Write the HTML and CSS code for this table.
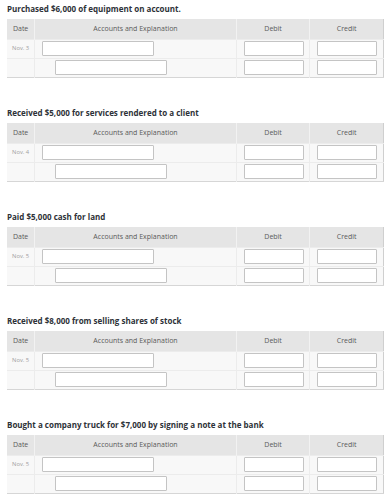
FILE: index.html
```html
<!DOCTYPE html>
<html lang="en">
<head>
  <meta charset="UTF-8">
  <meta name="viewport" content="width=device-width, initial-scale=1">
  <title>Journal Entries</title>
  <link rel="stylesheet" href="styles.css">
</head>
<body>
  <div id="entries">
    <!-- sections are built below -->
  </div>

  <script>
    const entries = [
      { title: "Purchased $6,000 of equipment on account.", date: "Nov. 3" },
      { title: "Received $5,000 for services rendered to a client", date: "Nov. 4" },
      { title: "Paid $5,000 cash for land", date: "Nov. 5" },
      { title: "Received $8,000 from selling shares of stock", date: "Nov. 5" },
      { title: "Bought a company truck for $7,000 by signing a note at the bank", date: "Nov. 5" }
    ];

    const wrap = document.getElementById("entries");

    entries.forEach((entry) => {
      const section = document.createElement("div");
      section.className = "entry";
      section.innerHTML = `
        <h3>${entry.title}</h3>
        <table>
          <thead>
            <tr>
              <th class="col-date">Date</th>
              <th class="col-acct">Accounts and Explanation</th>
              <th class="col-amt">Debit</th>
              <th class="col-amt">Credit</th>
            </tr>
          </thead>
          <tbody>
            <tr>
              <td class="date">${entry.date}</td>
              <td><input type="text" class="acct"></td>
              <td><input type="text" class="amt"></td>
              <td><input type="text" class="amt"></td>
            </tr>
            <tr>
              <td class="date"></td>
              <td><input type="text" class="acct indent"></td>
              <td><input type="text" class="amt"></td>
              <td><input type="text" class="amt"></td>
            </tr>
          </tbody>
        </table>
      `;
      wrap.appendChild(section);
    });
  </script>
</body>
</html>
```

FILE: styles.css
```css
body {
  margin: 0;
  padding: 0 3px 0 7px;
  font-family: "Open Sans", "Liberation Sans", sans-serif;
  background: #fff;
  color: #333;
}

.entry {
  height: 104px;
}

h3 {
  margin: 0;
  padding: 4px 0 5px;
  height: 10px;
  font-size: 8px;
  line-height: 10px;
  font-weight: 700;
  color: #2e3238;
}

table {
  width: 377px;
  border-collapse: collapse;
  table-layout: fixed;
  border-right: 1px solid #cfcfcf;
  border-bottom: 1px solid #d6d6d6;
}

thead tr {
  height: 20px;
}

tbody tr {
  height: 19px;
}

th {
  padding: 0;
  background: #e5e5e5;
  border-left: 1px solid #f2f2f2;
  font-size: 7px;
  line-height: 10px;
  font-weight: 400;
  color: #5a5a5a;
  text-align: center;
  vertical-align: middle;
}

th:first-child {
  border-left: none;
}

.col-date { width: 27px; }
.col-acct { width: 199px; }
.col-amt { width: 72px; }

td {
  padding: 0 0 0 7px;
  background: #f8f8f8;
  border-left: 1px solid #ececec;
  border-top: 1px solid #ececec;
  vertical-align: middle;
  text-align: left;
  line-height: 8px;
}

td:first-child {
  border-left: none;
}

td.date {
  padding: 0 0 2px;
  font-size: 5.8px;
  color: #a0a0a0;
  text-align: center;
}

input {
  display: block;
  box-sizing: border-box;
  height: 15px;
  margin: 0;
  padding: 0 2px;
  border: 1px solid #c4c4c4;
  border-radius: 1px;
  background: #fff;
  font-size: 6px;
}

input.acct {
  width: 112px;
}

input.acct.indent {
  margin-left: 13px;
}

input.amt {
  width: 60px;
}
```
